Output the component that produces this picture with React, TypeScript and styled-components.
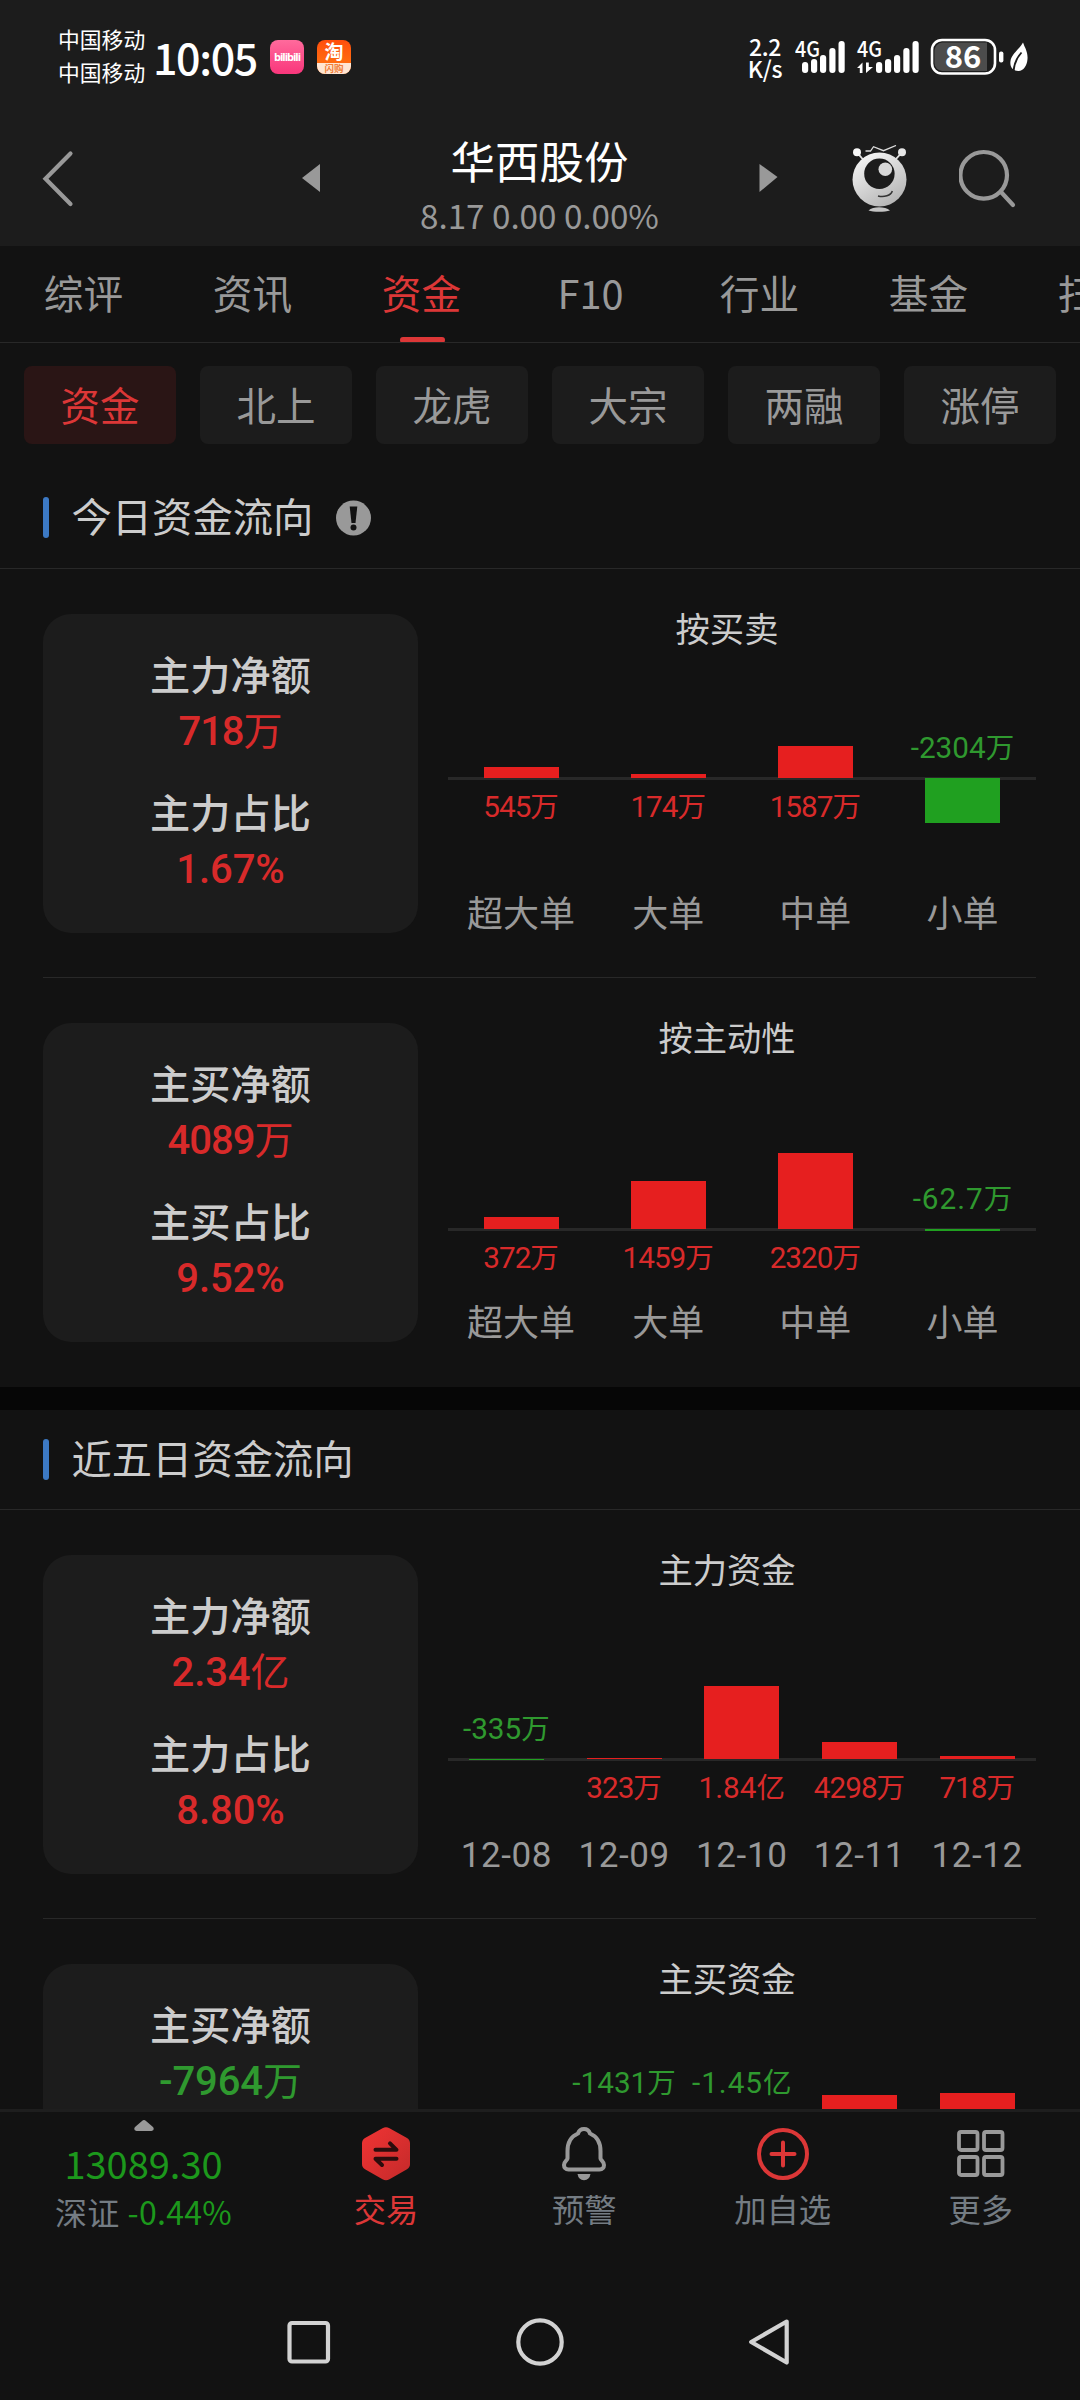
import React from "react";
import styled, { createGlobalStyle } from "styled-components";

const CJK = `"Noto Sans CJK SC", "Noto Sans", sans-serif`;
const DIN = `Roboto, "Noto Sans CJK SC", sans-serif`;

const C = {
  bg: "#121212",
  panel: "#1c1c1c",
  line: "#282828",
  text: "#cccccc",
  muted: "#999999",
  slate: "#747c83",
  accent: "#dc3737",
  red: "#e61f1f",
  green: "#20a020",
  redText: "#d82a2a",
  greenText: "#2f992f",
};

const Global = createGlobalStyle`
  html, body { margin: 0; padding: 0; background: ${C.bg}; }
  * { box-sizing: border-box; }
  svg { display: block; flex: none; }
`;

const Screen = styled.div`
  width: 1080px;
  height: 2400px;
  overflow: hidden;
  display: flex;
  flex-direction: column;
  background: ${C.bg};
  font-family: ${CJK};
  color: ${C.text};
  white-space: nowrap;
`;

/* ---------- status bar ---------- */

const StatusBar = styled.header`
  height: 116px;
  flex: none;
  background: ${C.panel};
  display: flex;
  justify-content: space-between;
  padding: 0 49px 0 58px;
  color: #fff;
`;

const StatusLeft = styled.div`
  display: flex;
  align-items: center;
  height: 114px;
`;

const Carriers = styled.div`
  font-size: 21.8px;
  line-height: 33px;
  width: 95px;
  margin-bottom: 4px;
  display: flex;
  flex-direction: column;
`;

const Clock = styled.div`
  font-size: 43px;
  font-weight: 500;
  line-height: 60px;
  width: 117px;
  margin-bottom: 3px;
  letter-spacing: -1.4px;
`;

const BiliIcon = styled.div`
  width: 34px;
  height: 34px;
  border-radius: 8px;
  background: linear-gradient(#ff6a9c, #f9367b);
  display: flex;
  align-items: center;
  justify-content: center;
  font-size: 11px;
  font-weight: 700;
  line-height: 34px;
  letter-spacing: -1px;
  font-family: "Open Sans", sans-serif;
  margin-right: 13px;
`;

const TaoIcon = styled.div`
  width: 34px;
  height: 34px;
  border-radius: 8px;
  overflow: hidden;
  display: grid;
  grid-template-rows: 23px 11px;
  background: linear-gradient(#ff4e0c, #ff6a10 60%);
  text-align: center;
`;

const TaoTop = styled.div`
  font-size: 19px;
  line-height: 22px;
  font-weight: 700;
`;

const TaoBottom = styled.div`
  background: #ffe6d3;
  color: #f0803a;
  font-size: 9.5px;
  line-height: 11px;
  font-weight: 700;
`;

const StatusRight = styled.div`
  display: flex;
  align-items: center;
  height: 114px;
`;

const NetSpeed = styled.div`
  width: 36px;
  margin-right: 12px;
  display: flex;
  flex-direction: column;
  align-items: center;
  font-size: 23px;
  font-weight: 500;
  line-height: 22px;
  letter-spacing: -0.3px;
`;

const SvgText = styled.text`
  font-family: ${CJK};
  font-weight: 500;
  fill: #fff;
`;

/* ---------- title bar ---------- */

const TitleBar = styled.div`
  height: 130px;
  flex: none;
  background: ${C.panel};
  display: grid;
  grid-template-columns: 302px 18px 1fr 19px 74px 55px 52px 56px 65px;
  align-items: start;
`;

const IconSlot = styled.div<{ $left?: number; $top: number }>`
  padding: ${(p) => p.$top}px 0 0 ${(p) => p.$left ?? 0}px;
`;

const StockTitle = styled.div`
  padding-top: 14px;
  display: flex;
  flex-direction: column;
  align-items: center;
`;

const StockName = styled.h1`
  margin: 0;
  font-size: 44.5px;
  line-height: 60px;
  font-weight: 400;
  color: #fff;
`;

const StockQuote = styled.div`
  font-size: 33.2px;
  line-height: 50px;
  font-weight: 400;
  color: ${C.muted};
`;

/* ---------- tabs ---------- */

const Tabs = styled.nav`
  height: 97px;
  flex: none;
  display: flex;
  overflow: hidden;
  border-bottom: 1px solid ${C.line};
`;

const Tab = styled.div<{ $on?: boolean }>`
  width: 169px;
  flex: none;
  height: 97px;
  display: flex;
  flex-direction: column;
  align-items: center;
  justify-content: space-between;
  font-size: 39.7px;
  line-height: 91px;
  text-indent: -2px;
  color: ${(p) => (p.$on ? C.accent : C.muted)};
  &::after {
    content: "";
    flex: none;
    width: 45px;
    height: 6px;
    border-radius: 3px;
    background: ${(p) => (p.$on ? C.accent : "transparent")};
  }
`;

const Chips = styled.div`
  height: 124px;
  flex: none;
  display: flex;
  gap: 24px;
  padding: 23px 24px 0;
`;

const Chip = styled.div<{ $on?: boolean }>`
  width: 152px;
  height: 78px;
  border-radius: 8px;
  background: ${(p) => (p.$on ? "#2a1515" : C.panel)};
  color: ${(p) => (p.$on ? C.accent : C.muted)};
  font-size: 39.5px;
  line-height: 75px;
  text-align: center;
`;

/* ---------- sections ---------- */

const Scroller = styled.main`
  height: 1642px;
  flex: none;
  overflow: hidden;
`;

const SectionHead = styled.div<{ $h: number }>`
  height: ${(p) => p.$h}px;
  display: flex;
  align-items: center;
  padding: 0 43px;
  border-bottom: 1px solid ${C.line};
  &::before {
    content: "";
    width: 6px;
    height: 41px;
    border-radius: 3px;
    background: #3c79c4;
    margin-right: 22.5px;
  }
`;

const SectionTitle = styled.h2`
  margin: 0 23px 5px 0;
  font-size: 40.3px;
  line-height: 60px;
  font-weight: 400;
  color: ${C.text};
`;

const SectionGap = styled.div`
  height: 23px;
  background: #060606;
`;

const Row = styled.section`
  height: 409px;
  display: flex;
  padding-left: 43px;
  padding-right: 44px;
`;

const RowDivider = styled.hr`
  margin: -1px 44px 0 43px;
  height: 1px;
  border: 0;
  background: ${C.line};
`;

const Card = styled.div`
  width: 375px;
  height: 319px;
  margin-top: 45px;
  border-radius: 28px;
  background: ${C.panel};
  display: flex;
  flex-direction: column;
  align-items: center;
  padding-top: 31px;
`;

const CardLabel = styled.div`
  font-size: 40.2px;
  line-height: 56px;
  font-weight: 500;
`;

const CardValue = styled.div<{ $down?: boolean; $spacing: number }>`
  height: 56px;
  margin-top: 3px;
  margin-bottom: 23px;
  font-family: ${DIN};
  font-size: 40px;
  line-height: 56px;
  font-weight: 500;
  letter-spacing: ${(p) => p.$spacing}px;
  color: ${(p) => (p.$down ? C.greenText : C.redText)};
`;

const Unit = styled.span<{ $size: number }>`
  font-family: ${CJK};
  font-weight: 400;
  font-size: ${(p) => p.$size}px;
  line-height: 1;
  letter-spacing: 0;
`;

const ChartPane = styled.div`
  flex: 1;
  height: 364px;
  padding-top: 38px;
  display: flex;
  flex-direction: column;
`;

const ChartTitle = styled.div`
  height: 42px;
  text-align: center;
  font-size: 34.3px;
  line-height: 40px;
`;

const Plot = styled.div<{ $zero: number }>`
  flex: 1;
  margin-left: 29.5px;
  display: flex;
  background: linear-gradient(#282828, #282828) 0 ${(p) => p.$zero - 1}px / 100% 3px no-repeat;
`;

const Column = styled.div`
  flex: 1 1 0;
  min-width: 0;
  display: flex;
  flex-direction: column;
  align-items: center;
`;

const Above = styled.div<{ $h: number }>`
  height: ${(p) => p.$h}px;
  flex: none;
  display: flex;
  flex-direction: column;
  justify-content: flex-end;
  align-items: center;
`;

const Below = styled.div`
  flex: 1;
  display: flex;
  flex-direction: column;
  align-items: center;
`;

const Bar = styled.div<{ $h: number; $down?: boolean }>`
  width: 75px;
  height: ${(p) => p.$h}px;
  background: ${(p) => (p.$down ? C.green : C.red)};
`;

const BarLabel = styled.div<{ $down?: boolean; $spacing: number }>`
  height: 40px;
  margin: ${(p) => (p.$down ? "0 0 10px" : "9px 0 0")};
  font-family: ${DIN};
  font-size: 29.7px;
  line-height: 40px;
  letter-spacing: ${(p) => p.$spacing}px;
  color: ${(p) => (p.$down ? C.greenText : C.redText)};
`;

const Category = styled.div<{ $date?: boolean }>`
  height: 40px;
  font-family: ${(p) => (p.$date ? DIN : CJK)};
  font-size: ${(p) => (p.$date ? 35 : 36)}px;
  line-height: ${(p) => (p.$date ? 44 : 36)}px;
  letter-spacing: ${(p) => (p.$date ? 0.6 : 0)}px;
  color: ${C.muted};
`;

/* ---------- bottom bar ---------- */

const BottomBar = styled.footer`
  height: 291px;
  flex: none;
  border-top: 3px solid #1e1e1e;
  background: ${C.bg};
  display: flex;
  flex-direction: column;
`;

const Actions = styled.div`
  height: 168px;
  display: grid;
  grid-template-columns: 287px repeat(4, 1fr);
`;

const IndexTicker = styled.div`
  display: flex;
  flex-direction: column;
  align-items: center;
  padding-top: 8px;
  color: #1c981c;
`;

const IndexValue = styled.div`
  margin-top: 7px;
  font-size: 38px;
  line-height: 50px;
`;

const IndexChange = styled.div`
  font-size: 32px;
  line-height: 47px;
  letter-spacing: 0.3px;
`;

const IndexName = styled.span`
  color: ${C.slate};
  margin-right: 8px;
`;

const Action = styled.div<{ $on?: boolean }>`
  display: flex;
  flex-direction: column;
  align-items: center;
  padding-top: 14px;
  font-size: 32.3px;
  line-height: 44px;
  color: ${(p) => (p.$on ? C.accent : C.slate)};
  svg { margin-bottom: 4px; }
`;

const NavBar = styled.div`
  flex: 1;
  display: flex;
  justify-content: center;
  gap: 184px;
  padding-top: 37px;
`;

/* ---------- data ---------- */

type Point = { label: string; value?: string; unit?: string; h: number; down?: boolean };

const TABS = ["综评", "资讯", "资金", "F10", "行业", "基金", "扫雷"];
const CHIPS = ["资金", "北上", "龙虎", "大宗", "两融", "涨停"];

const BY_TRADE: Point[] = [
  { label: "超大单", value: "545", unit: "万", h: 11 },
  { label: "大单", value: "174", unit: "万", h: 4 },
  { label: "中单", value: "1587", unit: "万", h: 32 },
  { label: "小单", value: "-2304", unit: "万", h: 45, down: true },
];

const BY_ACTIVE: Point[] = [
  { label: "超大单", value: "372", unit: "万", h: 12 },
  { label: "大单", value: "1459", unit: "万", h: 48 },
  { label: "中单", value: "2320", unit: "万", h: 76 },
  { label: "小单", value: "-62.7", unit: "万", h: 2, down: true },
];

const MAIN_5D: Point[] = [
  { label: "12-08", value: "-335", unit: "万", h: 1, down: true },
  { label: "12-09", value: "323", unit: "万", h: 1 },
  { label: "12-10", value: "1.84", unit: "亿", h: 73 },
  { label: "12-11", value: "4298", unit: "万", h: 17 },
  { label: "12-12", value: "718", unit: "万", h: 3 },
];

const BUY_5D: Point[] = [
  { label: "12-08", h: 0 },
  { label: "12-09", value: "-1431", unit: "万", h: 6, down: true },
  { label: "12-10", value: "-1.45", unit: "亿", h: 57, down: true },
  { label: "12-11", value: "3868", unit: "万", h: 18 },
  { label: "12-12", value: "4089", unit: "万", h: 20 },
];

function tracking(value: string, base: number, step: number) {
  return base + (value.includes("-") ? step : 0) + (value.includes(".") ? step : 0);
}

function FlowChart({ title, zero, points }: { title: string; zero: number; points: Point[] }) {
  return (
    <ChartPane>
      <ChartTitle>{title}</ChartTitle>
      <Plot $zero={zero}>
        {points.map((p) => {
          const text = p.value && (
            <BarLabel $down={p.down} $spacing={tracking(p.value, -1, 1)}>
              {p.value}
              <Unit $size={28.5}>{p.unit}</Unit>
            </BarLabel>
          );
          const bar = <Bar $h={p.h} $down={p.down} />;
          return (
            <Column key={p.label}>
              <Above $h={zero}>{p.down ? text : bar}</Above>
              <Below>{p.down ? bar : text}</Below>
              <Category $date={p.label.includes("-")}>{p.label}</Category>
            </Column>
          );
        })}
      </Plot>
    </ChartPane>
  );
}

type Stat = { label: string; value: string; unit?: string; down?: boolean };

function StatCard({ stats }: { stats: Stat[] }) {
  return (
    <Card>
      {stats.map((s) => (
        <React.Fragment key={s.label}>
          <CardLabel>{s.label}</CardLabel>
          <CardValue $down={s.down} $spacing={tracking(s.value, -1, 0.9)}>
            {s.value}
            {s.unit && <Unit $size={39}>{s.unit}</Unit>}
          </CardValue>
        </React.Fragment>
      ))}
    </Card>
  );
}

/* ---------- icons ---------- */

const SIGNAL = [
  [0, 21, 11],
  [9, 18, 14],
  [18, 14, 18],
  [27.3, 7, 25],
  [36.5, 0, 32],
];

function Signal({ x }: { x: number }) {
  return (
    <g transform={`translate(${x} 2)`} fill="#fff">
      {SIGNAL.map(([bx, y, h]) => (
        <rect key={bx} x={bx} y={y + 1} width="6.2" height={h} rx="3" />
      ))}
    </g>
  );
}

function StatusIcons() {
  return (
    <svg width="236" height="38" viewBox="0 0 236 38">
      <SvgText x="0" y="18.5" fontSize="22" textLength="25" lengthAdjust="spacingAndGlyphs">4G</SvgText>
      <Signal x={7} />
      <SvgText x="62" y="18.5" fontSize="22" textLength="25" lengthAdjust="spacingAndGlyphs">4G</SvgText>
      <path d="M62 30 L67.5 24.5 V35 H64.8 V30 Z M71 24.5 H73.8 V29 H78 L71 35 Z" fill="#fff" />
      <Signal x={81} />
      <rect x="137" y="2" width="63" height="33.5" rx="10" fill="none" stroke="#fff" strokeWidth="2.6" />
      <path d="M147 4.6 H192 V32.9 H147 A8 8 0 0 1 139.5 25 V12 A8 8 0 0 1 147 4.6 Z" fill="#4c4c4c" />
      <text x="168" y="29.5" textAnchor="middle" fontSize="31" fontWeight="700" fontFamily={CJK} fill="#fff">86</text>
      <rect x="204" y="13.5" width="4.4" height="11" rx="2" fill="#fff" />
      <path d="M228 4.5 C230 10 233 14 232.5 21 C232 28 228 33.5 223 33 C219 32.5 214.5 30 215.5 23 C216.5 15.5 224 12 228 4.5 Z" fill="#fff" />
      <path d="M218.5 33.5 C219 26 221.5 20 226.5 14.5" fill="none" stroke={C.panel} strokeWidth="1.8" />
    </svg>
  );
}

function Mascot() {
  return (
    <svg width="57" height="70" viewBox="0 0 57 70">
      <defs>
        <linearGradient id="body" x1="0.1" y1="0" x2="0.7" y2="1">
          <stop offset="0" stopColor="#fafafa" />
          <stop offset="1" stopColor="#b4b4b4" />
        </linearGradient>
      </defs>
      <path d="M5 7.3 L11 14.5 M50 7.3 L43.5 14.5" stroke="#e2e2e2" strokeWidth="1.8" />
      <circle cx="5" cy="7.3" r="4" fill="#f8f8f8" />
      <circle cx="50" cy="7.3" r="4" fill="#e6e6e6" />
      <path d="M13.5 6 H18.5 L21.5 1.7 L31.5 5.7 L44 0.5" fill="none" stroke="#dcdcdc" strokeWidth="1.3" />
      <circle cx="27.5" cy="34.5" r="27" fill="url(#body)" />
      <circle cx="27.4" cy="28.7" r="15.2" fill={C.panel} />
      <circle cx="33.3" cy="24.3" r="6.8" fill="#d8d8d8" />
      <path d="M26 51 C32 52.7 39 50.5 40.3 46" fill="none" stroke="#333" strokeWidth="1.5" />
      <path d="M16.5 65.5 C21 61.3 33 61.3 38 65.5 C33 67.3 21 67.3 16.5 65.5 Z" fill="#c4c4c4" />
    </svg>
  );
}

export default function App() {
  return (
    <Screen>
      <Global />
      <StatusBar>
        <StatusLeft>
          <Carriers>
            <span>中国移动</span>
            <span>中国移动</span>
          </Carriers>
          <Clock>10:05</Clock>
          <BiliIcon>bilibili</BiliIcon>
          <TaoIcon>
            <TaoTop>淘</TaoTop>
            <TaoBottom>闪购</TaoBottom>
          </TaoIcon>
        </StatusLeft>
        <StatusRight>
          <NetSpeed>
            <span>2.2</span>
            <span>K/s</span>
          </NetSpeed>
          <StatusIcons />
        </StatusRight>
      </StatusBar>

      <TitleBar>
        <IconSlot $left={42} $top={34}>
          <svg width="34" height="58" viewBox="0 0 34 58">
            <path d="M28.5 3.5 L3.5 28.7 L28.5 54" fill="none" stroke={C.muted} strokeWidth="4.2" strokeLinecap="round" />
          </svg>
        </IconSlot>
        <IconSlot $top={48}>
          <svg width="18" height="28" viewBox="0 0 18 28">
            <path d="M18 0 V28 L0 14 Z" fill={C.muted} />
          </svg>
        </IconSlot>
        <StockTitle>
          <StockName>华西股份</StockName>
          <StockQuote>8.17 0.00 0.00%</StockQuote>
        </StockTitle>
        <IconSlot $top={48}>
          <svg width="19" height="28" viewBox="0 0 19 28">
            <path d="M0.5 0 V28 L18.5 13 Z" fill={C.muted} />
          </svg>
        </IconSlot>
        <span />
        <IconSlot $top={29}>
          <Mascot />
        </IconSlot>
        <span />
        <IconSlot $top={33}>
          <svg width="58" height="60" viewBox="0 0 58 60">
            <circle cx="24.7" cy="26.3" r="23.3" fill="none" stroke={C.muted} strokeWidth="4.2" />
            <path d="M42.5 43.5 L54 56" stroke={C.muted} strokeWidth="4.2" strokeLinecap="round" />
          </svg>
        </IconSlot>
        <span />
      </TitleBar>

      <Tabs>
        {TABS.map((t, i) => (
          <Tab key={t} $on={i === 2}>
            {t}
          </Tab>
        ))}
      </Tabs>
      <Chips>
        {CHIPS.map((t, i) => (
          <Chip key={t} $on={i === 0}>
            {t}
          </Chip>
        ))}
      </Chips>

      <Scroller>
        <SectionHead $h={102}>
          <SectionTitle>今日资金流向</SectionTitle>
          <svg width="35" height="36" viewBox="0 0 35 36">
            <circle cx="17.5" cy="18" r="17.5" fill={C.muted} />
            <path d="M13.7 6.5 H21.3 L19.5 23 H15.5 Z" fill={C.bg} />
            <circle cx="17.5" cy="27.5" r="3" fill={C.bg} />
          </svg>
        </SectionHead>
        <Row>
          <StatCard
            stats={[
              { label: "主力净额", value: "718", unit: "万" },
              { label: "主力占比", value: "1.67%" },
            ]}
          />
          <FlowChart title="按买卖" zero={129} points={BY_TRADE} />
        </Row>
        <RowDivider />
        <Row>
          <StatCard
            stats={[
              { label: "主买净额", value: "4089", unit: "万" },
              { label: "主买占比", value: "9.52%" },
            ]}
          />
          <FlowChart title="按主动性" zero={171} points={BY_ACTIVE} />
        </Row>
        <SectionGap />
        <SectionHead $h={100}>
          <SectionTitle>近五日资金流向</SectionTitle>
        </SectionHead>
        <Row>
          <StatCard
            stats={[
              { label: "主力净额", value: "2.34", unit: "亿" },
              { label: "主力占比", value: "8.80%" },
            ]}
          />
          <FlowChart title="主力资金" zero={169} points={MAIN_5D} />
        </Row>
        <RowDivider />
        <Row>
          <StatCard
            stats={[
              { label: "主买净额", value: "-7964", unit: "万", down: true },
              { label: "主买占比", value: "-2.99%", down: true },
            ]}
          />
          <FlowChart title="主买资金" zero={114} points={BUY_5D} />
        </Row>
      </Scroller>

      <BottomBar>
        <Actions>
          <IndexTicker>
            <svg width="20" height="11" viewBox="0 0 20 11">
              <path d="M2.5 11 Q-1 10 1 7 L8 1 Q10 -0.8 12 1 L19 7 Q21 10 17.5 11 Z" fill={C.muted} />
            </svg>
            <IndexValue>13089.30</IndexValue>
            <IndexChange>
              <IndexName>深证</IndexName>-0.44%
            </IndexChange>
          </IndexTicker>
          <Action $on>
            <svg width="50" height="56" viewBox="0 0 50 56">
              <defs>
                <linearGradient id="hex" x1="0" y1="0" x2="1" y2="1">
                  <stop offset="0" stopColor="#f03434" />
                  <stop offset="1" stopColor="#c42a2a" />
                </linearGradient>
              </defs>
              <path d="M21.5 2.2 Q25 0.2 28.5 2.2 L46 12 Q49 13.8 49 17.3 V38 Q49 41.5 46 43.3 L28.5 53.2 Q25 55.2 21.5 53.2 L4 43.3 Q1 41.5 1 38 V17.3 Q1 13.8 4 12 Z" fill="url(#hex)" />
              <path d="M14.5 23.8 H35.5 L29 17.3 M35.5 32.7 H14.5 L21 39" fill="none" stroke="#2b0d0d" strokeWidth="4" strokeLinecap="round" strokeLinejoin="round" />
            </svg>
            交易
          </Action>
          <Action>
            <svg width="50" height="56" viewBox="0 0 50 56">
              <path d="M25 3 C22 3 20 4.5 19 7.5 C12 10.5 8.5 17 8.5 25 V32.5 C8.5 34 5 35.5 5 39 C5 41.5 6.5 43.5 9.5 43.5 H40.5 C43.5 43.5 45 41.5 45 39 C45 35.5 41.5 34 41.5 32.5 V25 C41.5 17 38 10.5 31 7.5 C30 4.5 28 3 25 3 Z" fill="none" stroke={C.muted} strokeWidth="4" strokeLinejoin="round" />
              <path d="M18.5 48 H31.5 Q30.5 54 25 54.2 Q19.5 54 18.5 48 Z" fill={C.muted} />
            </svg>
            预警
          </Action>
          <Action>
            <svg width="54" height="56" viewBox="0 0 54 56">
              <circle cx="27" cy="28" r="24" fill="none" stroke={C.accent} strokeWidth="4" />
              <path d="M27 16.5 V39.5 M15.5 28 H38.5" stroke={C.accent} strokeWidth="4" strokeLinecap="round" />
            </svg>
            加自选
          </Action>
          <Action>
            <svg width="50" height="56" viewBox="0 0 50 56">
              <g fill="none" stroke={C.muted} strokeWidth="3.8">
                <rect x="3" y="6" width="18.5" height="18" rx="2" />
                <rect x="28" y="6" width="18.5" height="18" rx="2" />
                <rect x="3" y="31" width="18.5" height="18" rx="2" />
                <rect x="28" y="31" width="18.5" height="18" rx="2" />
              </g>
            </svg>
            更多
          </Action>
        </Actions>
        <NavBar>
          <svg width="46" height="50" viewBox="0 0 46 50" fill="none" stroke="#d2d2d2" strokeWidth="4.2">
            <rect x="4.5" y="6" width="38.5" height="38.5" rx="2.5" />
          </svg>
          <svg width="50" height="50" viewBox="0 0 50 50" fill="none" stroke="#d2d2d2" strokeWidth="4.2">
            <circle cx="25" cy="25" r="21.7" />
          </svg>
          <svg width="46" height="50" viewBox="0 0 46 50" fill="none" stroke="#d2d2d2" strokeWidth="4.2" strokeLinejoin="round">
            <path d="M37.7 4.5 L2.2 25 L37.7 45.5 Z" />
          </svg>
        </NavBar>
      </BottomBar>
    </Screen>
  );
}
